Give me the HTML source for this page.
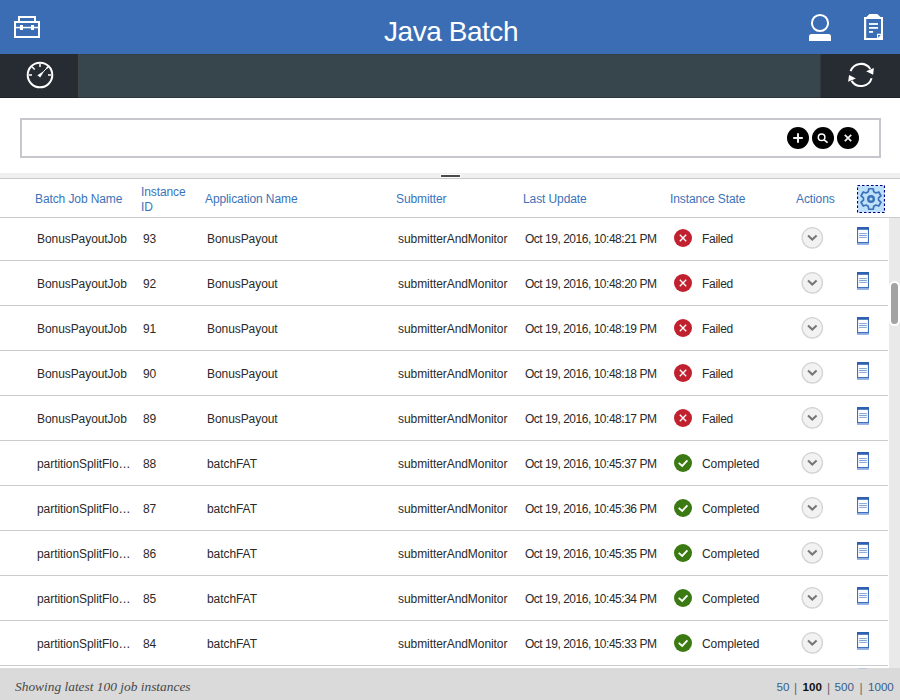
<!DOCTYPE html>
<html><head><meta charset="utf-8">
<style>
*{margin:0;padding:0;box-sizing:border-box}
html,body{width:900px;height:700px;overflow:hidden;background:#fff;font-family:"Liberation Sans",sans-serif}
.abs{position:absolute}
svg{position:absolute;display:block}
#hdr{left:0;top:0;width:900px;height:54px;background:#3b6db5}
#title{left:1px;top:0;width:900px;height:54px;text-align:center;color:#fff;font-size:28px;line-height:64px;letter-spacing:-0.45px}
#bar{left:0;top:54px;width:900px;height:44px;background:#37454d}
#barl{left:0;top:54px;width:78px;height:44px;background:#262c32}
#barr{left:821px;top:54px;width:79px;height:44px;background:#262c32}
#search{left:20px;top:118px;width:861px;height:40px;border:2px solid #c6c7cc;background:#fff}
#split{left:0;top:173px;width:900px;height:6px;background:#efefef;border-bottom:1px solid #c9c9c9}
#grip{left:441px;top:175px;width:19px;height:1.5px;background:#4a4a4a;box-shadow:0 0 0 1px #fff}
#hline{left:0;top:217px;width:900px;height:1px;background:#cccccc}
.th{position:absolute;color:#3b73b9;font-size:12px;line-height:15px;white-space:nowrap;letter-spacing:-0.1px}
.ln{position:absolute;left:0;width:888px;height:1px;background:#cccccc}
.c{position:absolute;line-height:14px;font-size:12px;color:#2a2a2a;white-space:nowrap;letter-spacing:-0.07px}
.d{letter-spacing:-0.48px}
.st{left:674px}
.chev{left:801px}
.log{left:857px}
#track{left:889px;top:218px;width:11px;height:450px;background:#e9e9e9}
#thumb{left:889px;top:281px;width:11px;height:45px;background:#a3a3a3;border:2px solid #fff;border-radius:6px}
#footer{left:0;top:668px;width:900px;height:32px;background:#dadada}
#ftxt{left:15px;top:680px;font-family:"Liberation Serif",serif;font-style:italic;font-size:13.4px;line-height:14px;color:#474747;white-space:nowrap}
.pg{position:absolute;top:680px;font-size:11.6px;line-height:14px;white-space:nowrap;color:#33608e}
.pg.sep{color:#666;font-size:12px;top:681px}
.pg.bold{color:#111;font-weight:bold}
</style></head><body>
<div id="hdr" class="abs"></div>
<div id="title" class="abs">Java Batch</div>
<svg style="left:0;top:0" width="54" height="54" viewBox="0 0 54 54">
 <path fill="#fff" fill-rule="evenodd" d="M18 16H36V21H34V18H20V21H18Z"/>
 <path fill="#fff" fill-rule="evenodd" d="M14 21H40V38H14ZM16 23V36H38V23Z"/>
 <rect x="16" y="26.8" width="22" height="1.5" fill="#fff"/>
 <rect x="20" y="25" width="3" height="5" fill="#fff"/>
 <rect x="31" y="25" width="3" height="5" fill="#fff"/>
</svg>
<svg style="left:800px;top:0" width="100" height="54" viewBox="800 0 100 54">
 <circle cx="820" cy="23" r="8.1" fill="none" stroke="#fff" stroke-width="2"/>
 <path fill="#fff" d="M809 41V36.5Q809 34 811.5 34H828.5Q831 34 831 36.5V41Z"/>
 <path fill="#fff" fill-rule="evenodd" d="M869.4 14H877.3L880.5 17H883V40H864V17H866.5ZM866.2 19.1V38H877V33.7H881V19.1Z"/>
 <path fill="#3b6db5" d="M878.1 35.1H880.7L878.2 37.8Z"/>
 <rect x="869" y="23.1" width="9" height="1.8" fill="#fff"/>
 <rect x="869" y="27" width="9" height="1.8" fill="#fff"/>
 <rect x="869" y="31" width="4.1" height="1.8" fill="#fff"/>
</svg>
<div id="bar" class="abs"></div>
<div id="barl" class="abs"></div>
<div id="barr" class="abs"></div>
<div class="abs" style="left:78px;top:54px;width:1px;height:44px;background:#414646"></div>
<div class="abs" style="left:820px;top:54px;width:1px;height:44px;background:#2e383e"></div>
<div class="abs" style="left:79px;top:54px;width:741px;height:1px;background:#343f46"></div>
<div class="abs" style="left:0;top:97px;width:78px;height:1px;background:#1e2328"></div><div class="abs" style="left:78px;top:97px;width:743px;height:1px;background:#2c363c"></div><div class="abs" style="left:821px;top:97px;width:79px;height:1px;background:#1e2328"></div>
<svg style="left:0;top:54px" width="78" height="44" viewBox="0 54 78 44">
 <circle cx="40" cy="75" r="12.3" fill="none" stroke="#fff" stroke-width="2"/>
 <path d="M40 63.8V67M29 75H32M48 75H51M32 66.7L34.7 69.6M48.6 66.4L46.2 68.8" stroke="#fff" stroke-width="1.5" fill="none"/><path d="M46.2 68.8L43.5 71.5" stroke="#fff" stroke-width="1" fill="none"/>
 <path fill="#fff" d="M37.4 75.2L40.2 77.6L44.6 70.6Z"/>
</svg>
<svg style="left:821px;top:54px" width="79" height="44" viewBox="821 54 79 44">
 <path d="M850.57 71.2A11.1 11.1 0 0 1 870.31 68.95" fill="none" stroke="#fff" stroke-width="2"/>
 <path fill="#fff" d="M866.1 71.3L873.9 68L873.1 74.7Z"/>
 <path d="M871.61 78.25A11.1 11.1 0 0 1 851.59 80.88" fill="none" stroke="#fff" stroke-width="2"/>
 <path fill="#fff" d="M848.1 81.8L849.1 75L855.9 78.6Z"/>
</svg>
<div id="search" class="abs"></div>
<svg style="left:786px;top:126px" width="75" height="24" viewBox="786 126 75 24">
 <circle cx="798" cy="138" r="11" fill="#000"/>
 <path d="M793.2 138H802.8M798 133.2V142.8" stroke="#f2f2f2" stroke-width="2"/>
 <circle cx="823" cy="138" r="11" fill="#000"/>
 <circle cx="821.6" cy="137.3" r="3.3" fill="none" stroke="#fff" stroke-width="1.5"/>
 <path d="M823.8 139.6L827.6 142.6" stroke="#fff" stroke-width="1.6"/>
 <circle cx="848" cy="138" r="11" fill="#000"/>
 <path d="M844.8 134.8L851.2 141.2M851.2 134.8L844.8 141.2" stroke="#f0f0f0" stroke-width="1.8"/>
</svg>
<div id="split" class="abs"></div>
<div id="grip" class="abs"></div>
<div id="hline" class="abs"></div>
<div class="th" style="left:35px;top:192px">Batch Job Name</div>
<div class="th" style="left:141px;top:185px">Instance<br>ID</div>
<div class="th" style="left:205px;top:192px">Application Name</div>
<div class="th" style="left:396px;top:192px">Submitter</div>
<div class="th" style="left:523px;top:192px">Last Update</div>
<div class="th" style="left:670px;top:192px">Instance State</div>
<div class="th" style="left:796px;top:192px">Actions</div>
<svg style="left:857px;top:185px" width="28" height="28" viewBox="0 0 28 28">
 <rect x="0.5" y="0.5" width="27" height="27" fill="#bfe0fb" stroke="#000080" stroke-width="1.2" stroke-dasharray="2.5 2"/>
 <path fill="none" stroke="#3b73b9" stroke-width="1.6" stroke-linejoin="round" transform="translate(14 14) scale(1.08) translate(-14 -14)" d="M12 4.5H16L16.6 7.3L18.5 8.4L21.2 7.5L23.2 11L21 12.9V15.1L23.2 17L21.2 20.5L18.5 19.6L16.6 20.7L16 23.5H12L11.4 20.7L9.5 19.6L6.8 20.5L4.8 17L7 15.1V12.9L4.8 11L6.8 7.5L9.5 8.4L11.4 7.3Z"/>
 <circle cx="14" cy="14" r="2.8" fill="none" stroke="#3b73b9" stroke-width="2.4"/>
</svg>
<div class="ln" style="top:260px"></div>
<div class="c" style="top:232px;left:37px">BonusPayoutJob</div>
<div class="c" style="top:232px;left:143px">93</div>
<div class="c" style="top:232px;left:207px">BonusPayout</div>
<div class="c" style="top:232px;left:398px">submitterAndMonitor</div>
<div class="c d" style="top:232px;left:525px">Oct 19, 2016, 10:48:21 PM</div>
<svg class="st" style="top:229px" width="18" height="18" viewBox="0 0 18 18"><circle cx="9" cy="9" r="9" fill="#c1212f"/><path d="M5.8 5.8 L12.2 12.2 M12.2 5.8 L5.8 12.2" fill="none" stroke="#fff" stroke-width="1.35"/></svg>
<div class="c" style="top:232px;left:702px;letter-spacing:-0.3px">Failed</div>
<svg class="chev" style="top:227px" width="23" height="23" viewBox="0 0 23 23"><circle cx="11.3" cy="10.8" r="10.2" fill="#f2f2f2" stroke="#d4d4d4" stroke-width="1.3"/><path d="M7 8.6L11.3 12.6L15.6 8.6" fill="none" stroke="#767676" stroke-width="2"/></svg>
<svg class="log" style="top:227px" width="12" height="18" viewBox="0 0 12 18"><rect x="0" y="0" width="12" height="16" fill="#3f70bf"/><rect x="0" y="0" width="12" height="2.8" fill="#2d60b0"/><rect x="1.1" y="2.8" width="9.8" height="12.2" fill="#fff"/><path d="M2.1 6.6H9.9M2.1 8.5H9.9M2.1 10.4H9.9" stroke="#7397d0" stroke-width="0.9"/><rect x="0" y="16" width="12" height="1.9" fill="#90ade0"/></svg>
<div class="ln" style="top:305px"></div>
<div class="c" style="top:277px;left:37px">BonusPayoutJob</div>
<div class="c" style="top:277px;left:143px">92</div>
<div class="c" style="top:277px;left:207px">BonusPayout</div>
<div class="c" style="top:277px;left:398px">submitterAndMonitor</div>
<div class="c d" style="top:277px;left:525px">Oct 19, 2016, 10:48:20 PM</div>
<svg class="st" style="top:274px" width="18" height="18" viewBox="0 0 18 18"><circle cx="9" cy="9" r="9" fill="#c1212f"/><path d="M5.8 5.8 L12.2 12.2 M12.2 5.8 L5.8 12.2" fill="none" stroke="#fff" stroke-width="1.35"/></svg>
<div class="c" style="top:277px;left:702px;letter-spacing:-0.3px">Failed</div>
<svg class="chev" style="top:272px" width="23" height="23" viewBox="0 0 23 23"><circle cx="11.3" cy="10.8" r="10.2" fill="#f2f2f2" stroke="#d4d4d4" stroke-width="1.3"/><path d="M7 8.6L11.3 12.6L15.6 8.6" fill="none" stroke="#767676" stroke-width="2"/></svg>
<svg class="log" style="top:272px" width="12" height="18" viewBox="0 0 12 18"><rect x="0" y="0" width="12" height="16" fill="#3f70bf"/><rect x="0" y="0" width="12" height="2.8" fill="#2d60b0"/><rect x="1.1" y="2.8" width="9.8" height="12.2" fill="#fff"/><path d="M2.1 6.6H9.9M2.1 8.5H9.9M2.1 10.4H9.9" stroke="#7397d0" stroke-width="0.9"/><rect x="0" y="16" width="12" height="1.9" fill="#90ade0"/></svg>
<div class="ln" style="top:350px"></div>
<div class="c" style="top:322px;left:37px">BonusPayoutJob</div>
<div class="c" style="top:322px;left:143px">91</div>
<div class="c" style="top:322px;left:207px">BonusPayout</div>
<div class="c" style="top:322px;left:398px">submitterAndMonitor</div>
<div class="c d" style="top:322px;left:525px">Oct 19, 2016, 10:48:19 PM</div>
<svg class="st" style="top:319px" width="18" height="18" viewBox="0 0 18 18"><circle cx="9" cy="9" r="9" fill="#c1212f"/><path d="M5.8 5.8 L12.2 12.2 M12.2 5.8 L5.8 12.2" fill="none" stroke="#fff" stroke-width="1.35"/></svg>
<div class="c" style="top:322px;left:702px;letter-spacing:-0.3px">Failed</div>
<svg class="chev" style="top:317px" width="23" height="23" viewBox="0 0 23 23"><circle cx="11.3" cy="10.8" r="10.2" fill="#f2f2f2" stroke="#d4d4d4" stroke-width="1.3"/><path d="M7 8.6L11.3 12.6L15.6 8.6" fill="none" stroke="#767676" stroke-width="2"/></svg>
<svg class="log" style="top:317px" width="12" height="18" viewBox="0 0 12 18"><rect x="0" y="0" width="12" height="16" fill="#3f70bf"/><rect x="0" y="0" width="12" height="2.8" fill="#2d60b0"/><rect x="1.1" y="2.8" width="9.8" height="12.2" fill="#fff"/><path d="M2.1 6.6H9.9M2.1 8.5H9.9M2.1 10.4H9.9" stroke="#7397d0" stroke-width="0.9"/><rect x="0" y="16" width="12" height="1.9" fill="#90ade0"/></svg>
<div class="ln" style="top:395px"></div>
<div class="c" style="top:367px;left:37px">BonusPayoutJob</div>
<div class="c" style="top:367px;left:143px">90</div>
<div class="c" style="top:367px;left:207px">BonusPayout</div>
<div class="c" style="top:367px;left:398px">submitterAndMonitor</div>
<div class="c d" style="top:367px;left:525px">Oct 19, 2016, 10:48:18 PM</div>
<svg class="st" style="top:364px" width="18" height="18" viewBox="0 0 18 18"><circle cx="9" cy="9" r="9" fill="#c1212f"/><path d="M5.8 5.8 L12.2 12.2 M12.2 5.8 L5.8 12.2" fill="none" stroke="#fff" stroke-width="1.35"/></svg>
<div class="c" style="top:367px;left:702px;letter-spacing:-0.3px">Failed</div>
<svg class="chev" style="top:362px" width="23" height="23" viewBox="0 0 23 23"><circle cx="11.3" cy="10.8" r="10.2" fill="#f2f2f2" stroke="#d4d4d4" stroke-width="1.3"/><path d="M7 8.6L11.3 12.6L15.6 8.6" fill="none" stroke="#767676" stroke-width="2"/></svg>
<svg class="log" style="top:362px" width="12" height="18" viewBox="0 0 12 18"><rect x="0" y="0" width="12" height="16" fill="#3f70bf"/><rect x="0" y="0" width="12" height="2.8" fill="#2d60b0"/><rect x="1.1" y="2.8" width="9.8" height="12.2" fill="#fff"/><path d="M2.1 6.6H9.9M2.1 8.5H9.9M2.1 10.4H9.9" stroke="#7397d0" stroke-width="0.9"/><rect x="0" y="16" width="12" height="1.9" fill="#90ade0"/></svg>
<div class="ln" style="top:440px"></div>
<div class="c" style="top:412px;left:37px">BonusPayoutJob</div>
<div class="c" style="top:412px;left:143px">89</div>
<div class="c" style="top:412px;left:207px">BonusPayout</div>
<div class="c" style="top:412px;left:398px">submitterAndMonitor</div>
<div class="c d" style="top:412px;left:525px">Oct 19, 2016, 10:48:17 PM</div>
<svg class="st" style="top:409px" width="18" height="18" viewBox="0 0 18 18"><circle cx="9" cy="9" r="9" fill="#c1212f"/><path d="M5.8 5.8 L12.2 12.2 M12.2 5.8 L5.8 12.2" fill="none" stroke="#fff" stroke-width="1.35"/></svg>
<div class="c" style="top:412px;left:702px;letter-spacing:-0.3px">Failed</div>
<svg class="chev" style="top:407px" width="23" height="23" viewBox="0 0 23 23"><circle cx="11.3" cy="10.8" r="10.2" fill="#f2f2f2" stroke="#d4d4d4" stroke-width="1.3"/><path d="M7 8.6L11.3 12.6L15.6 8.6" fill="none" stroke="#767676" stroke-width="2"/></svg>
<svg class="log" style="top:407px" width="12" height="18" viewBox="0 0 12 18"><rect x="0" y="0" width="12" height="16" fill="#3f70bf"/><rect x="0" y="0" width="12" height="2.8" fill="#2d60b0"/><rect x="1.1" y="2.8" width="9.8" height="12.2" fill="#fff"/><path d="M2.1 6.6H9.9M2.1 8.5H9.9M2.1 10.4H9.9" stroke="#7397d0" stroke-width="0.9"/><rect x="0" y="16" width="12" height="1.9" fill="#90ade0"/></svg>
<div class="ln" style="top:485px"></div>
<div class="c" style="top:457px;left:37px">partitionSplitFlo…</div>
<div class="c" style="top:457px;left:143px">88</div>
<div class="c" style="top:457px;left:207px">batchFAT</div>
<div class="c" style="top:457px;left:398px">submitterAndMonitor</div>
<div class="c d" style="top:457px;left:525px">Oct 19, 2016, 10:45:37 PM</div>
<svg class="st" style="top:454px" width="18" height="18" viewBox="0 0 18 18"><circle cx="9" cy="9" r="9" fill="#3b7a12"/><path d="M4.7 8.9L8.2 11.9L13.4 6.3" fill="none" stroke="#fff" stroke-width="1.8"/></svg>
<div class="c" style="top:457px;left:702px">Completed</div>
<svg class="chev" style="top:452px" width="23" height="23" viewBox="0 0 23 23"><circle cx="11.3" cy="10.8" r="10.2" fill="#f2f2f2" stroke="#d4d4d4" stroke-width="1.3"/><path d="M7 8.6L11.3 12.6L15.6 8.6" fill="none" stroke="#767676" stroke-width="2"/></svg>
<svg class="log" style="top:452px" width="12" height="18" viewBox="0 0 12 18"><rect x="0" y="0" width="12" height="16" fill="#3f70bf"/><rect x="0" y="0" width="12" height="2.8" fill="#2d60b0"/><rect x="1.1" y="2.8" width="9.8" height="12.2" fill="#fff"/><path d="M2.1 6.6H9.9M2.1 8.5H9.9M2.1 10.4H9.9" stroke="#7397d0" stroke-width="0.9"/><rect x="0" y="16" width="12" height="1.9" fill="#90ade0"/></svg>
<div class="ln" style="top:530px"></div>
<div class="c" style="top:502px;left:37px">partitionSplitFlo…</div>
<div class="c" style="top:502px;left:143px">87</div>
<div class="c" style="top:502px;left:207px">batchFAT</div>
<div class="c" style="top:502px;left:398px">submitterAndMonitor</div>
<div class="c d" style="top:502px;left:525px">Oct 19, 2016, 10:45:36 PM</div>
<svg class="st" style="top:499px" width="18" height="18" viewBox="0 0 18 18"><circle cx="9" cy="9" r="9" fill="#3b7a12"/><path d="M4.7 8.9L8.2 11.9L13.4 6.3" fill="none" stroke="#fff" stroke-width="1.8"/></svg>
<div class="c" style="top:502px;left:702px">Completed</div>
<svg class="chev" style="top:497px" width="23" height="23" viewBox="0 0 23 23"><circle cx="11.3" cy="10.8" r="10.2" fill="#f2f2f2" stroke="#d4d4d4" stroke-width="1.3"/><path d="M7 8.6L11.3 12.6L15.6 8.6" fill="none" stroke="#767676" stroke-width="2"/></svg>
<svg class="log" style="top:497px" width="12" height="18" viewBox="0 0 12 18"><rect x="0" y="0" width="12" height="16" fill="#3f70bf"/><rect x="0" y="0" width="12" height="2.8" fill="#2d60b0"/><rect x="1.1" y="2.8" width="9.8" height="12.2" fill="#fff"/><path d="M2.1 6.6H9.9M2.1 8.5H9.9M2.1 10.4H9.9" stroke="#7397d0" stroke-width="0.9"/><rect x="0" y="16" width="12" height="1.9" fill="#90ade0"/></svg>
<div class="ln" style="top:575px"></div>
<div class="c" style="top:547px;left:37px">partitionSplitFlo…</div>
<div class="c" style="top:547px;left:143px">86</div>
<div class="c" style="top:547px;left:207px">batchFAT</div>
<div class="c" style="top:547px;left:398px">submitterAndMonitor</div>
<div class="c d" style="top:547px;left:525px">Oct 19, 2016, 10:45:35 PM</div>
<svg class="st" style="top:544px" width="18" height="18" viewBox="0 0 18 18"><circle cx="9" cy="9" r="9" fill="#3b7a12"/><path d="M4.7 8.9L8.2 11.9L13.4 6.3" fill="none" stroke="#fff" stroke-width="1.8"/></svg>
<div class="c" style="top:547px;left:702px">Completed</div>
<svg class="chev" style="top:542px" width="23" height="23" viewBox="0 0 23 23"><circle cx="11.3" cy="10.8" r="10.2" fill="#f2f2f2" stroke="#d4d4d4" stroke-width="1.3"/><path d="M7 8.6L11.3 12.6L15.6 8.6" fill="none" stroke="#767676" stroke-width="2"/></svg>
<svg class="log" style="top:542px" width="12" height="18" viewBox="0 0 12 18"><rect x="0" y="0" width="12" height="16" fill="#3f70bf"/><rect x="0" y="0" width="12" height="2.8" fill="#2d60b0"/><rect x="1.1" y="2.8" width="9.8" height="12.2" fill="#fff"/><path d="M2.1 6.6H9.9M2.1 8.5H9.9M2.1 10.4H9.9" stroke="#7397d0" stroke-width="0.9"/><rect x="0" y="16" width="12" height="1.9" fill="#90ade0"/></svg>
<div class="ln" style="top:620px"></div>
<div class="c" style="top:592px;left:37px">partitionSplitFlo…</div>
<div class="c" style="top:592px;left:143px">85</div>
<div class="c" style="top:592px;left:207px">batchFAT</div>
<div class="c" style="top:592px;left:398px">submitterAndMonitor</div>
<div class="c d" style="top:592px;left:525px">Oct 19, 2016, 10:45:34 PM</div>
<svg class="st" style="top:589px" width="18" height="18" viewBox="0 0 18 18"><circle cx="9" cy="9" r="9" fill="#3b7a12"/><path d="M4.7 8.9L8.2 11.9L13.4 6.3" fill="none" stroke="#fff" stroke-width="1.8"/></svg>
<div class="c" style="top:592px;left:702px">Completed</div>
<svg class="chev" style="top:587px" width="23" height="23" viewBox="0 0 23 23"><circle cx="11.3" cy="10.8" r="10.2" fill="#f2f2f2" stroke="#d4d4d4" stroke-width="1.3"/><path d="M7 8.6L11.3 12.6L15.6 8.6" fill="none" stroke="#767676" stroke-width="2"/></svg>
<svg class="log" style="top:587px" width="12" height="18" viewBox="0 0 12 18"><rect x="0" y="0" width="12" height="16" fill="#3f70bf"/><rect x="0" y="0" width="12" height="2.8" fill="#2d60b0"/><rect x="1.1" y="2.8" width="9.8" height="12.2" fill="#fff"/><path d="M2.1 6.6H9.9M2.1 8.5H9.9M2.1 10.4H9.9" stroke="#7397d0" stroke-width="0.9"/><rect x="0" y="16" width="12" height="1.9" fill="#90ade0"/></svg>
<div class="ln" style="top:665px"></div>
<div class="c" style="top:637px;left:37px">partitionSplitFlo…</div>
<div class="c" style="top:637px;left:143px">84</div>
<div class="c" style="top:637px;left:207px">batchFAT</div>
<div class="c" style="top:637px;left:398px">submitterAndMonitor</div>
<div class="c d" style="top:637px;left:525px">Oct 19, 2016, 10:45:33 PM</div>
<svg class="st" style="top:634px" width="18" height="18" viewBox="0 0 18 18"><circle cx="9" cy="9" r="9" fill="#3b7a12"/><path d="M4.7 8.9L8.2 11.9L13.4 6.3" fill="none" stroke="#fff" stroke-width="1.8"/></svg>
<div class="c" style="top:637px;left:702px">Completed</div>
<svg class="chev" style="top:632px" width="23" height="23" viewBox="0 0 23 23"><circle cx="11.3" cy="10.8" r="10.2" fill="#f2f2f2" stroke="#d4d4d4" stroke-width="1.3"/><path d="M7 8.6L11.3 12.6L15.6 8.6" fill="none" stroke="#767676" stroke-width="2"/></svg>
<svg class="log" style="top:632px" width="12" height="18" viewBox="0 0 12 18"><rect x="0" y="0" width="12" height="16" fill="#3f70bf"/><rect x="0" y="0" width="12" height="2.8" fill="#2d60b0"/><rect x="1.1" y="2.8" width="9.8" height="12.2" fill="#fff"/><path d="M2.1 6.6H9.9M2.1 8.5H9.9M2.1 10.4H9.9" stroke="#7397d0" stroke-width="0.9"/><rect x="0" y="16" width="12" height="1.9" fill="#90ade0"/></svg>
<div id="track" class="abs"></div>
<div id="thumb" class="abs"></div>
<div id="footer" class="abs"></div>
<div class="abs" style="left:858px;top:668px;width:9px;height:1px;background:#b9c8dc"></div>
<div id="ftxt" class="abs">Showing latest 100 job instances</div>
<div class="pg" style="left:776.5px">50</div><div class="pg sep" style="left:794px">|</div><div class="pg bold" style="left:802.5px">100</div><div class="pg sep" style="left:827px">|</div><div class="pg" style="left:834.5px">500</div><div class="pg sep" style="left:859.5px">|</div><div class="pg" style="left:868px">1000</div>
</body></html>
